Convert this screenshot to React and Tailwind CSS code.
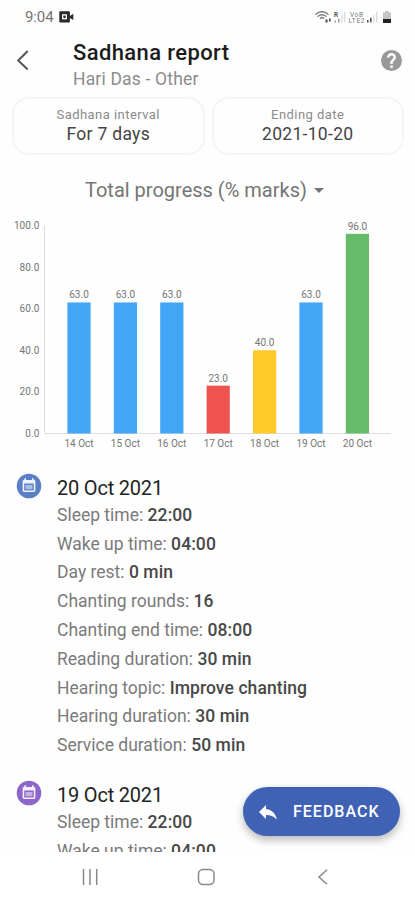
const chartData = [
  { label: '14 Oct', value: 63, color: '#42a5f5' },
  { label: '15 Oct', value: 63, color: '#42a5f5' },
  { label: '16 Oct', value: 63, color: '#42a5f5' },
  { label: '17 Oct', value: 23, color: '#ef5350' },
  { label: '18 Oct', value: 40, color: '#ffca28' },
  { label: '19 Oct', value: 63, color: '#42a5f5' },
  { label: '20 Oct', value: 96, color: '#66bb6a' },
];

const reports = [
  {
    date: '20 Oct 2021',
    color: '#5b7fc7',
    rows: [
      ['Sleep time', '22:00'],
      ['Wake up time', '04:00'],
      ['Day rest', '0 min'],
      ['Chanting rounds', '16'],
      ['Chanting end time', '08:00'],
      ['Reading duration', '30 min'],
      ['Hearing topic', 'Improve chanting'],
      ['Hearing duration', '30 min'],
      ['Service duration', '50 min'],
    ],
  },
  {
    date: '19 Oct 2021',
    color: '#8d66c9',
    rows: [
      ['Sleep time', '22:00'],
      ['Wake up time', '04:00'],
    ],
  },
];

const StatusBar = () => (
  <div className="h-[34px] shrink-0 flex items-center justify-between pl-[25px] pr-[24px] text-[#757575]">
    <div className="flex items-center gap-[5px]">
      <span className="text-[15px] leading-none tracking-[-0.1px]">9:04</span>
      <svg width="15" height="12" viewBox="0 0 15 12" fill="#2a2a2a">
        <rect x="0.3" y="0.3" width="10.6" height="11.2" rx="1" />
        <path d="M10.5 5.2 14.3 2.8v6.2l-3.8-2.2z" />
        <rect x="3.7" y="3.9" width="3.6" height="3.8" fill="none" stroke="#fff" strokeWidth="1.3" />
      </svg>
    </div>
    <svg width="76" height="16" viewBox="0 0 76 16">
      <g fill="none" stroke="#777" strokeWidth="1.3" strokeLinecap="round">
        <path d="M1 5.2C4 1.9 10 1.9 13 5.2" />
        <path d="M3 7.4c2-2.2 6-2.2 8 0" />
        <path d="M5.3 9.4c1-1 2.4-1 3.4 0" />
      </g>
      <path d="M10.5 10.5h2v3h-2zM14 9.5h1.6v3H14z" fill="#444" />
      <text x="19" y="7.5" fontSize="6.5" fontWeight="700" fill="#555">R</text>
      <path d="M19.5 11.5h1.6v2h-1.6zM23 9.5h1.5v4H23z" fill="#999" />
      <path d="M26.2 6h1.5v7.5h-1.5zM29 3h1.5v10.5H29z" fill="#ddd" />
      <text x="35" y="7.6" fontSize="6.5" textLength="13" fill="#777">VoB</text>
      <text x="33.5" y="14" fontSize="6.5" textLength="16" fill="#777">LTE2</text>
      <path d="M52 11h1.6v2.5H52zM55 8.8h1.6v4.7H55z" fill="#555" />
      <path d="M58 6h1.5v7.5H58zM61 3h1.5v10.5H61z" fill="#ddd" />
      <path d="M70 2h3.6v1.5H76v6.5h-8V3.5h2z" fill="#c4c4c4" />
      <path d="M68 10h8v4h-8z" fill="#222" />
    </svg>
  </div>
);

const Header = () => (
  <header className="h-[63px] shrink-0 flex pl-[16px] pr-[14px]">
    <svg className="mt-[16px] shrink-0" width="14" height="20" viewBox="0 0 14 20" fill="none" stroke="#555" strokeWidth="2">
      <path d="M11.7 1 2.2 10.5l9.5 9" />
    </svg>
    <div className="flex-1 pl-[43px]">
      <h1 className="mt-[5px] text-[22px] leading-[28px] font-medium tracking-[0.38px] text-[#1c1c1c] whitespace-nowrap">Sadhana report</h1>
      <p className="mt-[1px] text-[17.5px] leading-[22px] tracking-[0.18px] text-[#8c8c8c] whitespace-nowrap">Hari Das - Other</p>
    </div>
    <div className="mt-[16px] w-5 h-5 shrink-0">
      <svg width="21" height="21" viewBox="2 2 20 20">
        <circle cx="12" cy="12" r="10" fill="#999" />
        <path
          fill="#fff"
          stroke="#fff"
          strokeWidth="0.5"
          d="M13 19h-2v-2h2v2zm2.07-7.75-.9.92C13.45 12.9 13 13.5 13 15h-2v-.5c0-1.1.45-2.1 1.17-2.83l1.24-1.26c.37-.36.59-.86.59-1.41 0-1.1-.9-2-2-2s-2 .9-2 2H8c0-2.21 1.79-4 4-4s4 1.79 4 4c0 .88-.36 1.68-.93 2.25z"
        />
      </svg>
    </div>
  </header>
);

const FilterCard = ({ label, value }) => (
  <button className="flex-1 h-[58px] rounded-[17px] border-2 border-[#f4f4f4] flex flex-col items-center pt-[7px]">
    <span className="text-[13px] leading-[17px] tracking-[0.45px] text-[#8a8a8a]">{label}</span>
    <span className="text-[17.5px] leading-[22px] tracking-[0.3px] text-[#444]">{value}</span>
  </button>
);

// Plot area: 0 sits at y=223.5, each unit is 2.08px high
const ProgressChart = () => (
  <svg className="block shrink-0" width="415" height="250" viewBox="0 0 415 250" fontSize="10" fill="#757575">
    {[0, 20, 40, 60, 80, 100].map((tick) => (
      <text key={tick} x="39.5" y={227 - tick * 2.08} textAnchor="end" letterSpacing="0.1">
        {tick.toFixed(1)}
      </text>
    ))}
    <path d="M44.5 15.5V223.5H391" fill="none" stroke="#dedede" />
    {chartData.map((bar, i) => {
      const center = 79 + i * 46.4;
      const height = bar.value * 2.08;
      return (
        <g key={bar.label} textAnchor="middle">
          <rect x={center - 11.6} y={223.5 - height} width="23.2" height={height} fill={bar.color} />
          <text x={center} y={219.5 - height}>{bar.value.toFixed(1)}</text>
          <text x={center} y="237">{bar.label}</text>
        </g>
      );
    })}
  </svg>
);

const DayReport = ({ date, color, rows }) => (
  <section className="flex h-[307.5px] shrink-0 pl-[16px]">
    <svg className="shrink-0" width="26" height="26" viewBox="0 0 26 26">
      <circle cx="13" cy="13" r="12.3" fill={color} />
      <path
        fill="#fff"
        fillOpacity="0.9"
        fillRule="evenodd"
        d="M8.3 5.3H10V7h6V5.3h1.7V7h.3c.8 0 1.4.6 1.4 1.4v9.2c0 .8-.6 1.4-1.4 1.4H8c-.8 0-1.4-.6-1.4-1.4V8.4C6.6 7.6 7.2 7 8 7h.3zM8.2 10.5v7h9.6v-7z"
      />
      <path fill="#fff" fillOpacity="0.5" d="M9.5 12h7v4.3h-7z" />
    </svg>
    <div className="pl-[15px]">
      <h2 className="text-[20px] leading-[30px] tracking-[-0.2px] text-[#222]">{date}</h2>
      <div className="pt-[0.4px]">
        {rows.map(([name, value]) => (
          <p key={name} className="h-[28.8px] text-[17.5px] leading-[25px] text-[#7a7a7a] whitespace-nowrap">
            {name}: <span className="font-medium tracking-[0.08px] text-[#484848]">{value}</span>
          </p>
        ))}
      </div>
    </div>
  </section>
);

const NavBar = () => (
  <nav className="h-[48px] shrink-0 flex items-center pt-[2px] pl-[82px] bg-white">
    <svg width="16" height="16" viewBox="0 0 16 16" fill="none" stroke="#888" strokeWidth="1.5">
      <path d="M1.5 0v16M8 0v16M14.7 0v16" />
    </svg>
    <svg className="ml-[99px]" width="18" height="18" viewBox="0 0 18 18" fill="none" stroke="#888" strokeWidth="1.5">
      <rect x="1.5" y="1.5" width="15.5" height="15" rx="4.5" />
    </svg>
    <svg className="ml-[102px]" width="12" height="16" viewBox="0 0 12 16" fill="none" stroke="#888" strokeWidth="1.5">
      <path d="M10 .8 2 8l8 7.3" />
    </svg>
  </nav>
);

const App = () => {
  return (
    <div className="relative w-[415px] h-[900px] overflow-hidden flex flex-col bg-[#fefefe] font-[Roboto,sans-serif]">
      <StatusBar />
      <Header />
      <div className="flex gap-[7px] pl-[12px] pr-[11px] shrink-0">
        <FilterCard label="Sadhana interval" value="For 7 days" />
        <FilterCard label="Ending date" value="2021-10-20" />
      </div>
      <button className="h-[55px] shrink-0 flex items-center pt-[15px] pl-[85px] text-[20px] leading-[26px] text-[#757575] whitespace-nowrap">
        Total progress (% marks)
        <svg className="ml-[7px]" width="10" height="5" viewBox="0 0 10 5">
          <path d="M0 0h10L5 5z" fill="#757575" />
        </svg>
      </button>
      <ProgressChart />
      <main className="flex-1 min-h-0 overflow-hidden pt-[12.5px] flex flex-col">
        {reports.map((report) => (
          <DayReport key={report.date} {...report} />
        ))}
      </main>
      <NavBar />
      <button className="absolute left-[243px] top-[787px] w-[156.5px] h-[49px] rounded-full bg-[#3f62b5] shadow-[0_4px_8px_rgba(0,0,0,0.28)] flex items-center pl-[16px] text-white">
        <svg width="18" height="14" viewBox="3 5 18 14">
          <path d="M10 9V5l-7 7 7 7v-4.1c5 0 8.5 1.6 11 5.1-1-5-4-10-11-11z" fill="#fff" />
        </svg>
        <span className="ml-[16px] pt-[1px] text-[16px] leading-none font-medium tracking-[1px]">FEEDBACK</span>
      </button>
    </div>
  );
};

export default App;
